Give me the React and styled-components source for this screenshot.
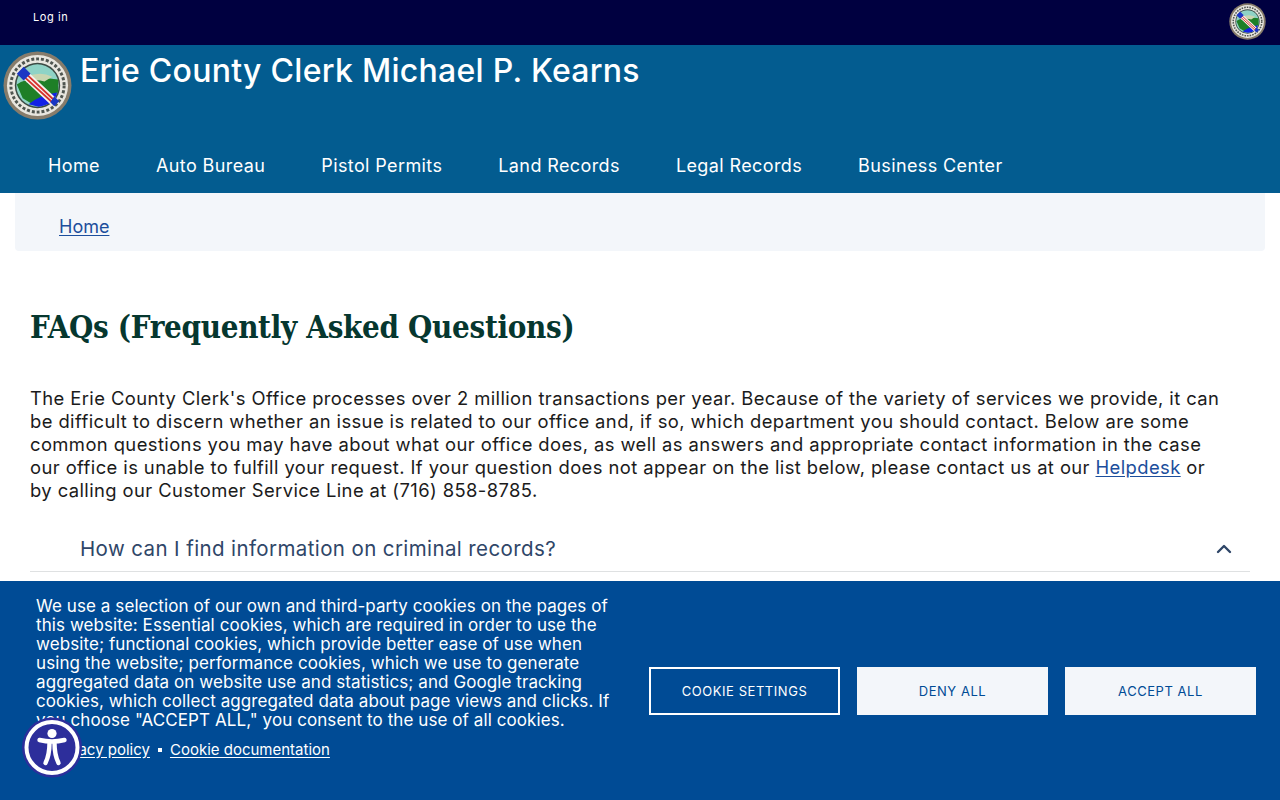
import React from "react"
import styled, { createGlobalStyle } from "styled-components"
import { ChevronUp } from "lucide-react"

const sans = `Inter, "Liberation Sans", sans-serif`

const Global = createGlobalStyle`
  html, body { margin: 0; padding: 0; height: 100%; overflow: hidden; background: #fff; }
  body { font-family: ${sans}; color: #1b1b1b; }
  * { box-sizing: border-box; }
`

const TopBar = styled.div`
  height: 45px;
  background: #000040;
  display: flex;
  justify-content: space-between;
  padding: 0 14px 0 33px;
`
const LogIn = styled.a`
  color: #fff;
  font-size: 11px;
  line-height: 15px;
  margin-top: 10px;
  letter-spacing: 0.6px;
`
const SmallSeal = styled.div`
  width: 37px;
  height: 37px;
  margin-top: 3px;
`
const Header = styled.header`
  height: 148px;
  background: #035c90;
  display: flex;
  flex-direction: column;
  justify-content: space-between;
`
const Brand = styled.div`
  display: flex;
  padding: 5px 0 0 3px;
  gap: 8px;
`
const BigSeal = styled.div`
  width: 69px;
  height: 71px;
`
const SiteName = styled.div`
  color: #fff;
  font-size: 32px;
  font-weight: 500;
  line-height: 40px;
  letter-spacing: 0.28px;
  padding-top: 1px;
`
const Nav = styled.nav`
  display: flex;
  gap: 56px;
  padding: 0 0 17px 48px;
`
const NavLink = styled.a`
  color: #fff;
  font-size: 18px;
  line-height: 21px;
  letter-spacing: 0.39px;
`
const Crumbs = styled.div`
  margin: 0 15px;
  height: 58px;
  background: #f3f6fa;
  border-radius: 0 0 4px 4px;
  padding: 23px 44px 0;
  font-size: 18px;
  line-height: 22px;
`
const BlueLink = styled.a`
  color: #1c4e9c;
  text-decoration: underline;
  text-underline-offset: 2px;
`
const Main = styled.main`
  padding: 55px 30px 0;
`
const Title = styled.h1`
  margin: 0;
  font-family: "DejaVu Serif Condensed", "DejaVu Serif", serif;
  font-size: 31px;
  line-height: 43px;
  font-weight: 700;
  letter-spacing: -0.3px;
  color: #06372f;
`
const Intro = styled.p`
  margin: 38px 0 0;
  font-size: 18.4px;
  line-height: 23px;
  color: #1b1b1b;
  letter-spacing: 0.41px;
`
const Question = styled.div`
  margin-top: 24px;
  height: 46px;
  border-bottom: 1px solid #dfe1e2;
  display: flex;
  align-items: center;
  justify-content: space-between;
  padding: 0 14px 0 50px;
  font-size: 20.5px;
  color: #2f4668;
  letter-spacing: 0.39px;
`
const Banner = styled.div`
  position: fixed;
  left: 0;
  right: 0;
  bottom: 0;
  height: 219px;
  background: #004b95;
  color: #fff;
  display: flex;
  padding: 16px 24px 0 36px;
`
const BannerText = styled.div`
  width: 580px;
  flex: none;
`
const BannerCopy = styled.p`
  margin: 0;
  font-size: 17px;
  line-height: 19px;
  letter-spacing: 0.08px;
`
const BannerLinks = styled.div`
  display: flex;
  align-items: center;
  gap: 8px;
  margin-top: 11px;
  padding-left: 15px;
  font-size: 15px;
  line-height: 18px;
`
const BannerLink = styled.a`
  color: #fff;
  text-decoration: underline;
  text-underline-offset: 2px;
`
const Dot = styled.span`
  width: 4px;
  height: 4px;
  background: #fff;
`
const Buttons = styled.div`
  margin-left: auto;
  display: flex;
  gap: 17px;
  margin-top: 70px;
  align-items: flex-start;
`
const CookieButton = styled.button`
  width: 191px;
  height: 48px;
  font-family: ${sans};
  font-size: 13px;
  letter-spacing: 0.55px;
  border: 2px solid ${p => (p.$outline ? "#fff" : "#f3f6fa")};
  background: ${p => (p.$outline ? "transparent" : "#f3f6fa")};
  color: ${p => (p.$outline ? "#fff" : "#004b95")};
`
const AccessButton = styled.button`
  position: fixed;
  left: 21px;
  top: 717px;
  width: 62px;
  height: 62px;
  padding: 0;
  border: 0;
  background: none;
`

function Seal() {
  return (
    <svg viewBox="0 0 70 70" width="100%" height="100%">
      <circle cx="35" cy="35" r="34.5" fill="#877c6b" />
      <circle cx="35" cy="35" r="31" fill="#e8e6df" />
      <circle cx="35" cy="35" r="27" fill="none" stroke="#4f5550" strokeWidth="3" strokeDasharray="3 2" />
      <circle cx="35" cy="35" r="23" fill="#3c4a44" />
      <circle cx="35" cy="35" r="21.5" fill="#8fd3c6" />
      <path d="M14 34 Q28 24 56 29 L56 42 Q40 46 30 54 L20 48 Z" fill="#1e7f27" />
      <path d="M24 26 Q38 20 50 26 L42 31 Q32 28 24 32 Z" fill="#c9d5b0" />
      <path d="M26 54 Q36 45 55 42 Q52 54 36 56.5 Z" fill="#1220e6" />
      <path d="M21 17 L55 49 L49 55 L15 23 Z" fill="#f6f1ee" />
      <path d="M20 20 L53 51 M18 23 L51 53" stroke="#d5312c" strokeWidth="1.8" />
      <path d="M21 16 L28 23 L21 30 L14 23 Z" fill="#1a36c4" />
      <path d="M52 46 L57 51 L52 56 L48 52 Z" fill="#1a36c4" />
    </svg>
  )
}

export default function App() {
  return (
    <>
      <Global />
      <TopBar>
        <LogIn>Log in</LogIn>
        <SmallSeal><Seal /></SmallSeal>
      </TopBar>
      <Header>
        <Brand>
          <BigSeal><Seal /></BigSeal>
          <SiteName>Erie County Clerk Michael P. Kearns</SiteName>
        </Brand>
        <Nav>
          {["Home", "Auto Bureau", "Pistol Permits", "Land Records", "Legal Records", "Business Center"].map(n => (
            <NavLink key={n}>{n}</NavLink>
          ))}
        </Nav>
      </Header>
      <Crumbs><BlueLink>Home</BlueLink></Crumbs>
      <Main>
        <Title>FAQs (Frequently Asked Questions)</Title>
        <Intro>
          The Erie County Clerk's Office processes over 2 million transactions per year. Because of the variety of services we provide, it can<br />
          be difficult to discern whether an issue is related to our office and, if so, which department you should contact. Below are some<br />
          common questions you may have about what our office does, as well as answers and appropriate contact information in the case<br />
          our office is unable to fulfill your request. If your question does not appear on the list below, please contact us at our <BlueLink>Helpdesk</BlueLink> or<br />
          by calling our Customer Service Line at (716) 858-8785.
        </Intro>
        <Question>
          How can I find information on criminal records?
          <ChevronUp size={24} color="#2f4668" strokeWidth={2.4} />
        </Question>
      </Main>
      <Banner>
        <BannerText>
          <BannerCopy>
            We use a selection of our own and third-party cookies on the pages of this website: Essential cookies, which are required in order to use the website; functional cookies, which provide better ease of use when using the website; performance cookies, which we use to generate aggregated data on website use and statistics; and Google tracking cookies, which collect aggregated data about page views and clicks. If you choose "ACCEPT ALL," you consent to the use of all cookies.
          </BannerCopy>
          <BannerLinks>
            <BannerLink>Privacy policy</BannerLink>
            <Dot />
            <BannerLink>Cookie documentation</BannerLink>
          </BannerLinks>
        </BannerText>
        <Buttons>
          <CookieButton $outline>COOKIE SETTINGS</CookieButton>
          <CookieButton>DENY ALL</CookieButton>
          <CookieButton>ACCEPT ALL</CookieButton>
        </Buttons>
      </Banner>
      <AccessButton aria-label="Accessibility">
        <svg viewBox="0 0 62 62" width="62" height="62">
          <circle cx="31" cy="30.5" r="30" fill="#2d2e9b" />
          <circle cx="31" cy="30.5" r="25.5" fill="none" stroke="#fff" strokeWidth="4" />
          <circle cx="31" cy="16.5" r="4.6" fill="#fff" />
          <path d="M18.5 23 Q31 26 43.5 23" fill="none" stroke="#fff" strokeWidth="4.4" strokeLinecap="round" />
          <path d="M28.5 26 Q28.5 38 24.5 46 M33.5 26 Q33.5 38 37.5 46" fill="none" stroke="#fff" strokeWidth="4.4" strokeLinecap="round" />
        </svg>
      </AccessButton>
    </>
  )
}
